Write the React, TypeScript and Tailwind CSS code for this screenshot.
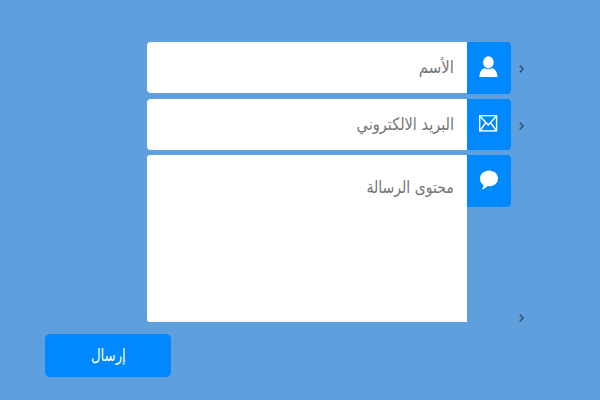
import type { ReactNode } from 'react';

function UserIcon() {
  return (
    <svg width="19" height="22" viewBox="0 0 19 22" fill="#fff">
      <ellipse cx="9.4" cy="6.3" rx="5.3" ry="6.1" />
      <path d="M0.3 20.9C0.6 16.6 2.2 13.6 5.2 12.1C6.4 13.6 12.4 13.6 13.6 12.1C16.6 13.6 18.2 16.6 18.5 20.9Z" />
    </svg>
  );
}

function MailIcon() {
  return (
    <svg width="19" height="17" viewBox="0 0 19 17" fill="none" stroke="#fff" strokeWidth="1.4" className="mt-[2px]">
      <rect x="0.7" y="0.7" width="16.9" height="15.2" />
      <path d="M1.2 1.5L9.2 10L17.2 1.5M1.2 15.5L6.7 7.7M17.2 15.5L11.6 7.7" />
    </svg>
  );
}

function CommentIcon() {
  return (
    <svg width="19" height="20" viewBox="-1 0 19 20" fill="#fff" className="mt-[1px]">
      <path d="M9.2 0.4C14.2 0.4 18 4 18 8.4C18 13 14.1 16.2 9 16.2C8.6 16.2 8.1 16.2 7.7 16.1C6.3 17.8 4 19.3 1.3 19.6C2.8 18.3 3.6 16.7 3.3 15C1.2 13.5 0 11.3 0 8.5C0 4 4 0.4 9.2 0.4Z" />
      <path d="M11.7 0.1h1.4v1.4z" fill="#26445f" />
    </svg>
  );
}

function Marker({ className }: { className: string }) {
  return (
    <svg width="5" height="8" viewBox="0 0 5 8" fill="none" stroke="#34495e" strokeWidth="1.4" className={className}>
      <path d="M0.7 0.6L4 4L0.7 7.4" />
    </svg>
  );
}

interface FieldProps {
  label: string;
  icon: ReactNode;
  tall?: boolean;
  textClass: string;
}

function Field({ label, icon, tall, textClass }: FieldProps) {
  return (
    <li className={`flex items-start ${tall ? 'h-[167px]' : 'h-[51.5px]'}`}>
      <Marker className={tall ? 'mt-[159px]' : 'mt-[23px]'} />
      <div className="mr-[7.6px] w-[44.4px] h-[51.5px] rounded-r-[4px] bg-[#0088ff] flex justify-center pt-[14px] pr-[1.4px]">
        {icon}
      </div>
      <div
        className={`w-[320px] bg-white pr-[13px] text-[#757575] ${
          tall ? 'h-[167px] rounded-l-[3px] pt-[19px]' : 'h-[51px] rounded-l-[4px] pt-[12px]'
        }`}
      >
        <span className={`inline-block whitespace-nowrap origin-right leading-[26px] ${textClass}`}>{label}</span>
      </div>
    </li>
  );
}

export default function App() {
  return (
    <div
      dir="rtl"
      className="w-[600px] h-[400px] overflow-hidden bg-[#609fdd] pt-[42px] font-['DejaVu_Sans',sans-serif]"
    >
      <ul className="flex flex-col gap-[5px] pr-[76px]">
        <Field label="الأسم" icon={<UserIcon />} textClass="text-[17px] scale-x-[0.88]" />
        <Field label="البريد الالكتروني" icon={<MailIcon />} textClass="text-[17px] scale-x-[0.855]" />
        <Field label="محتوى الرسالة" icon={<CommentIcon />} textClass="text-[17px] scale-x-[0.825]" tall />
      </ul>
      <div className="flex justify-end pl-[45px] mt-[12px]">
        <button className="w-[126.4px] h-[43px] rounded-[5px] bg-[#0088ff] text-white text-[17px]">
          <span className="inline-block scale-x-[0.78]">إرسال</span>
        </button>
      </div>
    </div>
  );
}
